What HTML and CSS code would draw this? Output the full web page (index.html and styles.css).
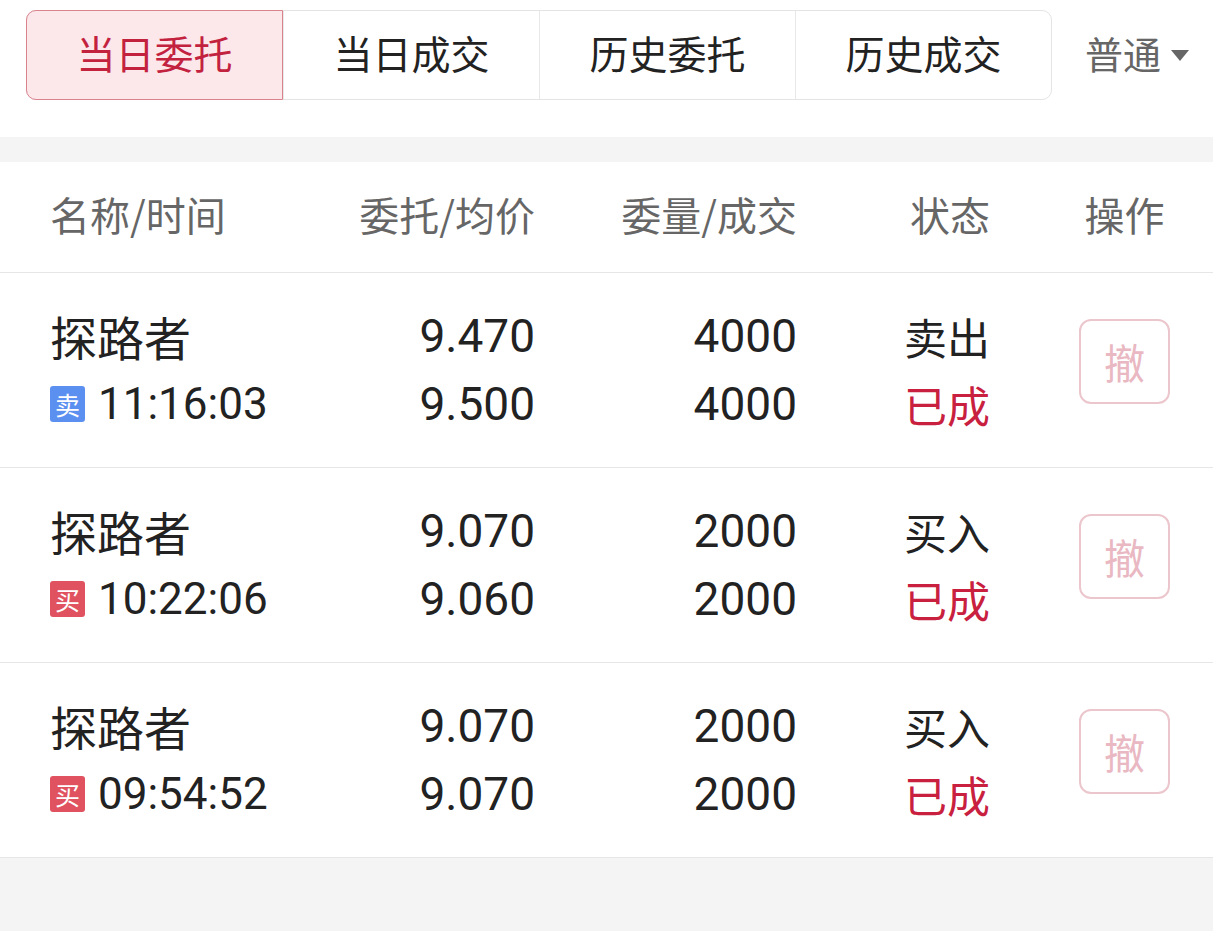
FILE: index.html
```html
<!DOCTYPE html>
<html lang="zh-CN">
<head>
  <meta charset="UTF-8" />
  <title>当日委托</title>
  <link rel="stylesheet" href="styles.css">
</head>
<body>
  <div class="top-bar">
    <div class="tabs">
      <div class="tab active">当日委托</div>
      <div class="tab">当日成交</div>
      <div class="tab">历史委托</div>
      <div class="tab">历史成交</div>
    </div>
    <div class="account-type">普通<span class="caret"></span></div>
  </div>

  <div class="orders">
    <div class="row head">
      <div class="c-name">名称/时间</div>
      <div class="c-num">委托/均价</div>
      <div class="c-num">委量/成交</div>
      <div class="c-status">状态</div>
      <div class="c-op">操作</div>
    </div>

    <div class="row">
      <div class="c-name">
        <div class="line name">探路者</div>
        <div class="line time"><span class="badge sell">卖</span>11:16:03</div>
      </div>
      <div class="c-num">
        <div class="line">9.470</div>
        <div class="line">9.500</div>
      </div>
      <div class="c-num">
        <div class="line">4000</div>
        <div class="line">4000</div>
      </div>
      <div class="c-status">
        <div class="line">卖出</div>
        <div class="line done">已成</div>
      </div>
      <div class="c-op"><button class="cancel-btn">撤</button></div>
    </div>

    <div class="row">
      <div class="c-name">
        <div class="line name">探路者</div>
        <div class="line time"><span class="badge buy">买</span>10:22:06</div>
      </div>
      <div class="c-num">
        <div class="line">9.070</div>
        <div class="line">9.060</div>
      </div>
      <div class="c-num">
        <div class="line">2000</div>
        <div class="line">2000</div>
      </div>
      <div class="c-status">
        <div class="line">买入</div>
        <div class="line done">已成</div>
      </div>
      <div class="c-op"><button class="cancel-btn">撤</button></div>
    </div>

    <div class="row">
      <div class="c-name">
        <div class="line name">探路者</div>
        <div class="line time"><span class="badge buy">买</span>09:54:52</div>
      </div>
      <div class="c-num">
        <div class="line">9.070</div>
        <div class="line">9.070</div>
      </div>
      <div class="c-num">
        <div class="line">2000</div>
        <div class="line">2000</div>
      </div>
      <div class="c-status">
        <div class="line">买入</div>
        <div class="line done">已成</div>
      </div>
      <div class="c-op"><button class="cancel-btn">撤</button></div>
    </div>
  </div>
</body>
</html>
```

FILE: styles.css
```css
body {
  margin: 0;
  background-color: #f4f4f4;
  font-family: Roboto, "Noto Sans CJK SC", sans-serif;
  color: #222;
}

.top-bar {
  display: flex;
  align-items: center;
  background-color: #fff;
  padding: 10px 0 37px 26px;
  margin-bottom: 25px;
}

.tabs {
  display: flex;
  width: 1026px;
  height: 90px;
  box-sizing: border-box;
  border: 1px solid #e4e4e4;
  border-radius: 10px;
}

.tab {
  flex: 1;
  display: flex;
  align-items: center;
  justify-content: center;
  padding-bottom: 6px;
  font-family: "Noto Sans CJK SC", sans-serif;
  font-size: 39px;
  color: #222;
  border-left: 1px solid #e8e8e8;
}

.tab:first-child {
  border-left: none;
}

.tab.active {
  margin: -1px 0 -1px -1px;
  background-color: #fce7eb;
  border: 1px solid #d9838f;
  border-radius: 10px 0 0 10px;
  color: #c3223f;
}

.account-type {
  display: flex;
  align-items: center;
  margin-left: 33px;
  padding-bottom: 6px;
  font-family: "Noto Sans CJK SC", sans-serif;
  font-size: 38px;
  color: #666;
}

.caret {
  margin-left: 10px;
  margin-top: 6px;
  border-left: 9px solid transparent;
  border-right: 9px solid transparent;
  border-top: 11px solid #666;
}

.orders {
  background-color: #fff;
}

.row {
  display: grid;
  grid-template-columns: 250px 235px 262px 193px 1fr;
  align-items: center;
  padding-left: 50px;
  height: 194px;
  border-bottom: 1px solid #e6e6e6;
}

.row.head {
  height: 104px;
  padding-bottom: 6px;
  font-family: "Noto Sans CJK SC", sans-serif;
  font-size: 40px;
  color: #666;
}

.c-num,
.c-status {
  text-align: right;
}

.c-op {
  display: flex;
  justify-content: center;
  padding-left: 46px;
}

.line {
  height: 68px;
  line-height: 68px;
  font-size: 46px;
}

.name {
  font-family: "Noto Sans CJK SC", sans-serif;
  font-size: 47px;
}

.time {
  display: flex;
  align-items: center;
  font-size: 44px;
}

.badge {
  display: inline-flex;
  align-items: center;
  justify-content: center;
  width: 35px;
  height: 36px;
  margin-right: 13px;
  border-radius: 3px;
  font-family: "Noto Sans CJK SC", sans-serif;
  font-size: 25px;
  line-height: 1;
  color: #fff;
}

.badge.sell {
  background-color: #5b8ff0;
}

.badge.buy {
  background-color: #e0525f;
}

.c-status .line {
  font-family: "Noto Sans CJK SC", sans-serif;
  font-size: 43px;
}

.done {
  color: #c8203e;
}

.cancel-btn {
  width: 91px;
  height: 85px;
  margin-bottom: 18px;
  background: #fff;
  border: 2px solid #ecc6cd;
  border-radius: 12px;
  font-family: "Noto Sans CJK SC", sans-serif;
  font-size: 41px;
  color: #e9b8c2;
  padding: 0;
}
```
